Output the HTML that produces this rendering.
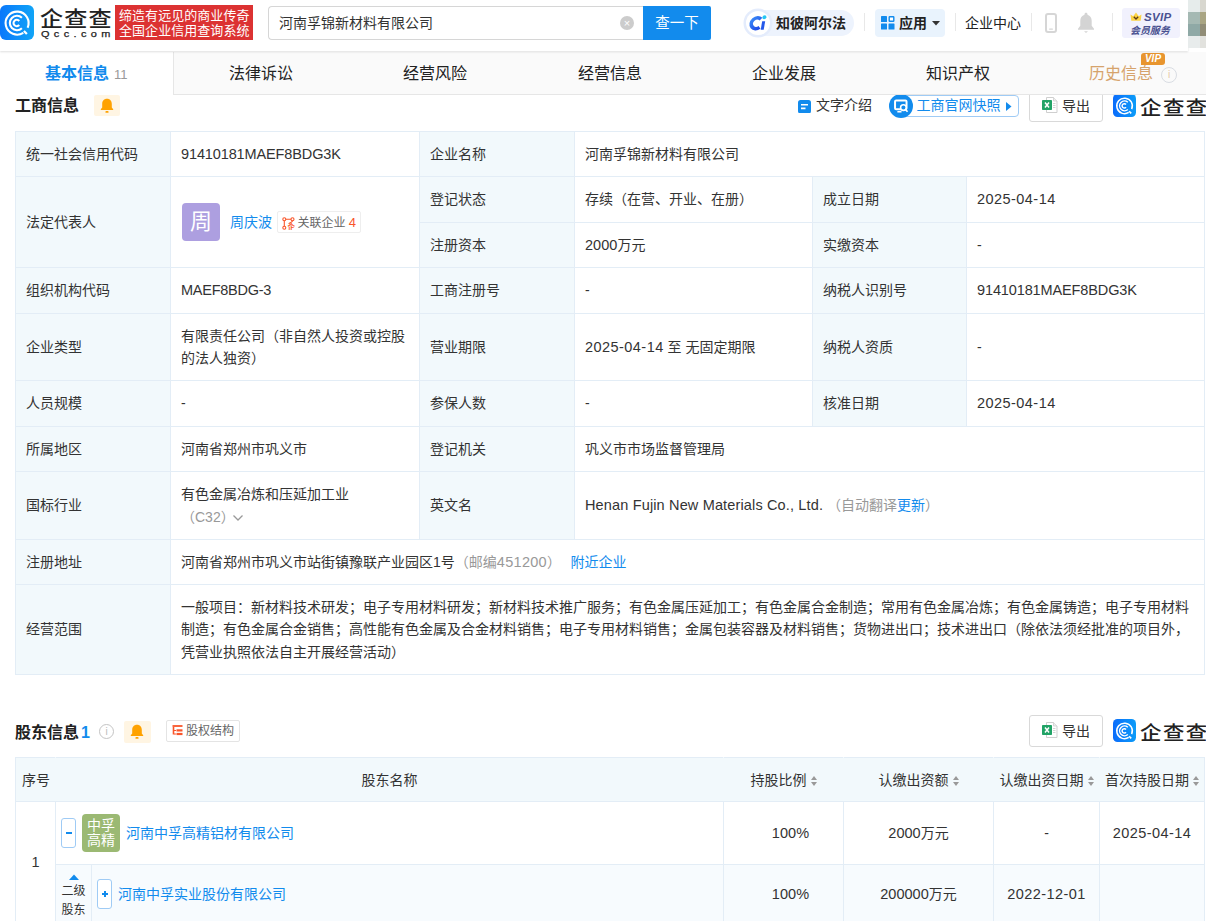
<!DOCTYPE html>
<html lang="zh-CN">
<head>
<meta charset="utf-8">
<title>河南孚锦新材料有限公司 - 企查查</title>
<style>
*{box-sizing:border-box;margin:0;padding:0}
html,body{width:1206px;height:921px;overflow:hidden;background:#fff}
body{font-family:"Liberation Sans","Noto Sans CJK SC",sans-serif;font-size:14px;color:#333;position:relative}
a{color:#128bed;text-decoration:none}
.abs{position:absolute}
/* header */
#hd{position:absolute;left:0;top:0;width:1188px;height:51px;background:#fff;box-shadow:0 1px 2px rgba(0,0,0,.13);z-index:5}
#logo{position:absolute;left:0;top:5px;width:34px;height:35px;border-radius:6px;background:linear-gradient(90deg,#0a78fb,#10a4f7)}
#brand{position:absolute;left:40px;top:5.500px;font-size:21px;line-height:26px;color:#222;letter-spacing:1px;white-space:nowrap;font-weight:500;transform:scaleX(1.1);transform-origin:0 0}
#brand2{position:absolute;left:41px;top:28px;font-size:9.500px;line-height:12px;color:#222;letter-spacing:3.800px;white-space:nowrap;font-weight:400;transform:scaleX(1.15);transform-origin:0 0;-webkit-text-stroke:.25px #222}
#slogan{position:absolute;left:115px;top:5px;width:138px;height:35px;background:#dc3232;color:#fff;font-size:13px;line-height:15px;padding:3px 0 0 4px;white-space:nowrap;letter-spacing:0.05px}
#search{position:absolute;left:268px;top:6px;width:375px;height:34px;border:1px solid #d6d6d6;border-right:0;border-radius:4px 0 0 4px;background:#fff;font-size:14px;line-height:32px;padding-left:10px;color:#333}
#clr{position:absolute;left:620px;top:16px;width:14px;height:14px;border-radius:7px;background:#ccc;color:#fff;font-size:11px;line-height:14px;text-align:center}
#sbtn{position:absolute;left:643px;top:6px;width:68px;height:34px;background:#128bed;color:#fff;font-size:14.500px;line-height:34px;text-align:center;border-radius:0 2px 2px 0}
#alpha{position:absolute;left:744px;top:10px;width:110px;height:26px;border-radius:13px;background:#edf3fd;font-size:14px;font-weight:700;color:#222;line-height:26px;padding-left:32px;white-space:nowrap}
#alpha i{position:absolute;left:2px;top:1px;width:24px;height:24px;border-radius:12px;background:#fff;box-shadow:0 0 0 2.500px #e4ecfc}
.vsep{position:absolute;top:13px;width:1px;height:18px;background:#e8e8e8}
#app{position:absolute;left:875px;top:9px;width:70px;height:28px;border-radius:4px;background:#e9f3fd;font-size:14px;font-weight:700;color:#222;line-height:28px;padding-left:24px;white-space:nowrap}
#qyzx{position:absolute;left:965px;top:13px;font-size:14px;line-height:20px;color:#222;white-space:nowrap}
#svip{position:absolute;left:1122px;top:8px;width:58px;height:30px;border-radius:3px;background:#f1f1fd;color:#44508d}
#svip .s1{position:absolute;left:22px;top:3px;font-size:11.500px;line-height:13px;font-weight:700;font-style:italic;letter-spacing:.3px;color:#4a5291}
#svip .s2{position:absolute;left:8px;top:16px;font-size:10px;line-height:13px;font-weight:700;font-style:italic;color:#4a5291;white-space:nowrap;letter-spacing:-.1px}
#pix{position:absolute;left:1188px;top:0;width:18px;height:48px;z-index:6}
#pix i{position:absolute;height:12px}
/* tabs */
#tabs{position:absolute;left:0;top:52px;width:1206px;height:43px;background:#fafafa;border-bottom:1px solid #e6e6e6}
#tabs .t{position:absolute;top:0;height:42px;line-height:44px;font-size:16px;color:#222;white-space:nowrap}
#tab0{position:absolute;left:0;top:52px;width:174px;height:43px;background:#fff;border-right:1px solid #e6e6e6}
#tab0 .tn{position:absolute;left:45px;top:0;line-height:44px;font-size:16px;font-weight:700;color:#128bed;white-space:nowrap}
#tab0 .tc{position:absolute;left:114px;top:2px;line-height:42px;font-size:13px;color:#999}
#vip{position:absolute;left:1141px;top:1px;width:24px;height:12px;background:#e8952f;color:#fff;font-size:10px;font-weight:700;font-style:italic;line-height:12px;text-align:center;border-radius:3px 3px 3px 0}
#info1{position:absolute;left:1161px;top:15px;width:16px;height:16px;border:1px solid #d9dde3;border-radius:8px;color:#e6c9a8;font-size:10px;line-height:13px;text-align:center}
.rep{position:relative;height:40px}
.rep .av{position:absolute;left:1px;top:1px;width:38px;height:38px;border-radius:4px;background:#ad9fe0;color:#fff;font-size:22px;line-height:38px;text-align:center}
.rep .nm{position:absolute;left:49px;top:9px;line-height:22px;white-space:nowrap}
.rep .rel{position:absolute;left:96px;top:9px;height:22px;border:1px solid #eee;border-radius:2px;line-height:21.500px;font-size:12px;color:#666;padding:0 4px 0 4px;white-space:nowrap}
.rep .rel svg{vertical-align:-2.500px;margin-right:2.500px}
.rep .rel b{color:#f9552a;font-weight:400;font-size:13px}
.exp{width:74px;height:32px;border:1px solid #d9d9d9;border-radius:3px;background:#fff;color:#333;font-size:14px;white-space:nowrap}
.slogo{width:23px;height:23px;border-radius:4.500px;background:linear-gradient(90deg,#0a6cfb,#0c9cf8);overflow:hidden}
.slogo svg{display:block}
.sbrand{font-size:19.500px;line-height:22px;color:#222;letter-spacing:1.300px;white-space:nowrap;font-weight:500;transform:scaleX(1.1);transform-origin:0 0}
.snap{height:22px;width:126px;border:1px solid #9fcbf5;border-radius:4px;background:#fff;color:#128bed;font-size:14px;line-height:19.500px;padding-left:22.500px;white-space:nowrap}
.infoc{width:15px;height:15px;border:1px solid #c4c4c4;border-radius:8px;color:#bbb;font-size:10px;line-height:13px;text-align:center}
.gq{height:22px;border:1px solid #e4e4e4;border-radius:2px;font-size:12px;line-height:21.500px;color:#666;padding:0 5px 0 5px;white-space:nowrap;background:#fff}
.gq svg{vertical-align:-1px;margin-right:3px}
#t2 th{background:#f2f9fc;color:#333;padding-top:2px;border-left-color:#f2f9fc;border-right-color:#f2f9fc}
#t2 th:first-child{border-left-color:#e3edf6}
#t2 th:last-child{border-right-color:#e3edf6}
#t2 .c{text-align:center;padding:0}
#t2 th.c{padding-top:2px}
#t2 tr.sub td{background:#f7fbfe}
.srt{display:inline-block;width:6px;height:10px;margin-left:4px;position:relative;vertical-align:-1px}
.srt:before{content:"";position:absolute;left:0;top:0;border:3px solid transparent;border-top:0;border-bottom:4px solid #999}
.srt:after{content:"";position:absolute;left:0;top:5.500px;border:3px solid transparent;border-bottom:0;border-top:4px solid #999}
.pm b{position:absolute;left:50%;top:50%;transform:translate(-50%,-50%);background:#128bed}
.pm{position:absolute;width:15px;height:30px;border:1px solid #9fcbf5;border-radius:3px;background:#fff;color:#128bed;font-size:12px;line-height:27px;text-align:center}
.clogo{position:absolute;left:26px;top:12px;width:38px;height:38px;border-radius:4px;background:#9bb973;color:#fff;font-size:14px;line-height:15px;text-align:center;padding-top:4px}
.n{font-size:14.500px;letter-spacing:.05px}
/* section */
.h2{position:absolute;font-size:16px;font-weight:700;color:#222;line-height:22px;white-space:nowrap}
.bell{position:absolute;width:26px;height:22px;background:#fff5e3;border-radius:2px}
table{border-collapse:collapse;table-layout:fixed;position:absolute}
td,th{border:1px solid #e3edf6;font-weight:400;font-size:14px;line-height:22.4px;color:#333;vertical-align:middle;text-align:left;padding:0 10px}
td.l{background:#f2f9fc}
.g{color:#999}
</style>
</head>
<body>
<svg class="abs" style="left:798px;top:99.500px" width="13" height="13.500" viewBox="0 0 13 13.500"><rect x="0" y="0" width="13" height="13.500" rx="2.500" fill="#128bed"/><path d="M3 4.800h7M3 8.400h4.500" stroke="#fff" stroke-width="1.600"/></svg><div class="abs" style="left:816px;top:94px;line-height:22px;color:#333;white-space:nowrap">文字介绍</div><div class="abs snap" style="left:893px;top:95px">工商官网快照<svg width="6" height="9" viewBox="0 0 6 9" style="margin-left:5.500px;vertical-align:-.5px"><path d="M0 0l5.500 4.500L0 9z" fill="#128bed"/></svg></div><div class="abs" style="left:889px;top:94px;width:24px;height:24px;border-radius:12px;background:#128bed"><svg width="24" height="24" viewBox="0 0 23 23"><rect x="5.800" y="6.300" width="11" height="8.400" rx="1" fill="none" stroke="#fff" stroke-width="1.900"/><circle cx="13.800" cy="13" r="2.700" fill="#128bed" stroke="#fff" stroke-width="1.500"/><path d="M15.800 15l2 2" stroke="#fff" stroke-width="1.600"/><path d="M8 17h4" stroke="#fff" stroke-width="1.500"/></svg></div><div class="abs exp" style="left:1029px;top:90px"><span style="position:absolute;left:12px;top:5.500px"><svg width="16" height="16" viewBox="0 0 16 16"><path d="M4.500 .5h7l3.500 3.500v11.500h-10.500z" fill="#fff" stroke="#cfcfcf" stroke-width="1"/><path d="M11.500 .5v3.500h3.500" fill="#eee" stroke="#cfcfcf" stroke-width=".8"/><path d="M11 6.500h2.500M11 8.500h2.500M11 10.500h2.500" stroke="#cfcfcf" stroke-width=".9"/><rect x="0" y="3" width="10" height="10" rx=".8" fill="#21a366"/><path d="M3 5.500l4 5M7 5.500l-4 5" stroke="#fff" stroke-width="1.500"/></svg></span><span style="position:absolute;left:32px;top:4px;line-height:22px">导出</span></div><div class="abs slogo" style="left:1113px;top:94px"><svg width="23" height="23" viewBox="0 0 34 34"><g fill="none" stroke="#fff" stroke-width="2.200"><path d="M27.600 22.300A11.500 11.500 0 1 0 23.300 27.300"/><path d="M21.900 12.200A7.200 7.200 0 1 0 21.900 22.800"/><path d="M19.200 15.500A3.200 3.200 0 1 0 19.200 19.500"/><path d="M23.900 25.400L26.900 28.600" stroke-width="2.400"/></g></svg></div><div class="abs sbrand" style="left:1140px;top:96.500px">企查查</div>
<div id="hd">
  <div id="logo"><svg width="34" height="35" viewBox="0 -0.5 34 35"><g fill="none" stroke="#fff" stroke-width="2.100" stroke-linecap="butt"><path d="M27.600 22.300A11.500 11.500 0 1 0 23.300 27.300"/><path d="M21.900 12.200A7.200 7.200 0 1 0 21.900 22.800"/><path d="M19.200 15.500A3.200 3.200 0 1 0 19.200 19.500"/><path d="M23.900 25.400L26.900 28.600" stroke-width="2.200"/></g></svg></div>
  <div id="brand">企查查</div>
  <div id="brand2">Qcc.com</div>
  <div id="slogan">缔造有远见的商业传奇<br>全国企业信用查询系统</div>
  <div id="search">河南孚锦新材料有限公司</div>
  <div id="clr">×</div>
  <div id="sbtn">查一下</div>
  <div id="alpha"><i><svg width="24" height="24" viewBox="0 0 24 24" style="position:absolute;left:0;top:0"><defs><linearGradient id="ag" x1="0" y1="0" x2="1" y2="1"><stop offset="0" stop-color="#3b8af7"/><stop offset="1" stop-color="#1c47e6"/></linearGradient></defs><g transform="skewX(-10) translate(2.200 0)"><path d="M14.200 8.100A5.400 5.400 0 1 0 14.200 16.300" fill="none" stroke="url(#ag)" stroke-width="3.600"/><path d="M17.300 10.300v8.400" stroke="#2458ea" stroke-width="3"/><circle cx="17.300" cy="6.200" r="2" fill="#25c6f4"/></g></svg></i>知彼阿尔法</div>
  <div class="vsep" style="left:864px"></div>
  <div id="app"><svg width="14" height="14" viewBox="0 0 14 14" style="position:absolute;left:6px;top:7px"><rect x="0" y="0" width="6" height="6" rx=".6" fill="#128bed"/><rect x="0" y="7.500" width="6" height="6" rx=".6" fill="#128bed"/><rect x="7.500" y="7.500" width="6" height="6" rx=".6" fill="#128bed"/><rect x="8.200" y=".7" width="4.600" height="4.600" rx=".5" fill="#fff" stroke="#128bed" stroke-width="1.400"/></svg><svg width="8" height="5" viewBox="0 0 8 5" style="position:absolute;left:57px;top:12px"><path d="M0 0h8L4 4.500z" fill="#333"/></svg>应用</div>
  <div class="vsep" style="left:955px"></div>
  <div id="qyzx">企业中心</div>
  <div class="vsep" style="left:1031px"></div>
  <div class="vsep" style="left:1112px"></div>
  <svg class="abs" style="left:1044px;top:12px" width="14" height="22" viewBox="0 0 14 22"><rect x="2" y="2" width="10" height="18" rx="2" fill="none" stroke="#d6d6d6" stroke-width="2"/><rect x="5" y="16.400" width="4" height="1.300" rx=".6" fill="#d6d6d6"/></svg>
  <svg class="abs" style="left:1076px;top:12px" width="20" height="22" viewBox="0 0 20 22"><path d="M10 .8c-.9 0-1.500.6-1.500 1.500v.4C5.700 3.500 4.300 6 4.300 8.800v5L2 16.800v1h16v-1l-2.300-3v-5c0-2.800-1.400-5.300-4.200-6.100v-.4c0-.9-.6-1.500-1.500-1.500z" fill="#d4d4d4"/><path d="M8 19.300h4l-2 1.700z" fill="#d4d4d4"/></svg>
  <div id="svip"><svg class="abs" style="left:8px;top:4px" width="12" height="10" viewBox="0 0 12 10"><path d="M.5 2.500L3.200 4.300 6 .6l2.800 3.700 2.700-1.800-.8 6.300H1.300z" fill="#fcd345"/><path d="M3.800 4.800L6 7l2.200-2.200" fill="none" stroke="#5a3a17" stroke-width="1.300"/></svg><span class="s1">SVIP</span><span class="s2">会员服务</span></div>
</div>
<div id="pix"><i style="left:0;top:0;width:12px;background:#e6eceb"></i><i style="left:12px;top:0;width:6px;background:#d8d7cf"></i><i style="left:0;top:12px;width:12px;background:#a5b9b3"></i><i style="left:12px;top:12px;width:6px;background:#a9a583"></i><i style="left:0;top:24px;width:12px;background:#8fa9a6"></i><i style="left:12px;top:24px;width:6px;background:#918d77"></i><i style="left:0;top:36px;width:12px;background:#e8ecec"></i><i style="left:12px;top:36px;width:6px;background:#e2e2de"></i></div>
<div id="tabs">
  <div class="t" style="left:229px">法律诉讼</div>
  <div class="t" style="left:403px">经营风险</div>
  <div class="t" style="left:578px">经营信息</div>
  <div class="t" style="left:752px">企业发展</div>
  <div class="t" style="left:926px">知识产权</div>
  <div class="t" style="left:1089px;color:#d6a36c">历史信息</div>
  <div id="vip">VIP</div>
  <div id="info1">i</div>
</div>
<div id="tab0"><span class="tn">基本信息</span><span class="tc">11</span></div>
<div class="h2" style="left:15px;top:94.500px">工商信息</div>
<div class="bell" style="left:94px;top:95px;height:21px"><svg width="26" height="22" viewBox="0 0 26 22"><path d="M13 3.800c-3 0-4.800 2.200-4.800 5v3.700l-1.400 1.800v.8h12.400v-.8l-1.400-1.800V8.800c0-2.800-1.800-5-4.800-5z" fill="#ffa200"/><rect x="11.400" y="16" width="3.200" height="1.800" rx=".9" fill="#ffa200"/></svg></div>
<table id="t1" style="left:15px;top:131px;width:1189px">
<colgroup><col style="width:155px"><col style="width:249px"><col style="width:155px"><col style="width:238px"><col style="width:154px"><col style="width:238px"></colgroup>
<tr style="height:45px"><td class="l">统一社会信用代码</td><td><span class="n" style="letter-spacing:-.12px">91410181MAEF8BDG3K</span></td><td class="l">企业名称</td><td colspan="3">河南孚锦新材料有限公司</td></tr>
<tr style="height:46px"><td class="l" rowspan="2">法定代表人</td><td rowspan="2"><div class="rep"><span class="av">周</span><a class="nm">周庆波</a><span class="rel"><svg width="13" height="13" viewBox="0 0 13 13"><g fill="none" stroke="#f9552a" stroke-width="1.100"><circle cx="2.300" cy="2.300" r="1.500"/><circle cx="10.500" cy="2.300" r="1.500"/><circle cx="2.300" cy="10.700" r="1.500"/><path d="M2.300 3.800v5.400M3.800 2.300h5.200M10.500 3.800c0 2-3.200 1.200-3.700 3.200"/></g><text x="5.600" y="12.600" font-size="7.500" fill="#f9552a" font-family="Noto Sans CJK SC,sans-serif" font-weight="700">企</text></svg>关联企业 <b>4</b></span></div></td><td class="l">登记状态</td><td>存续（在营、开业、在册）</td><td class="l">成立日期</td><td><span class="n" style="letter-spacing:.45px">2025-04-14</span></td></tr>
<tr style="height:45px"><td class="l">注册资本</td><td><span class="n">2000</span>万元</td><td class="l">实缴资本</td><td>-</td></tr>
<tr style="height:46px"><td class="l">组织机构代码</td><td><span class="n" style="letter-spacing:-.26px">MAEF8BDG-3</span></td><td class="l">工商注册号</td><td>-</td><td class="l">纳税人识别号</td><td><span class="n" style="letter-spacing:-.12px">91410181MAEF8BDG3K</span></td></tr>
<tr style="height:67px"><td class="l">企业类型</td><td>有限责任公司（非自然人投资或控股的法人独资）</td><td class="l">营业期限</td><td><span class="n" style="letter-spacing:.45px">2025-04-14</span> 至 无固定期限</td><td class="l">纳税人资质</td><td>-</td></tr>
<tr style="height:46px"><td class="l">人员规模</td><td>-</td><td class="l">参保人数</td><td>-</td><td class="l">核准日期</td><td><span class="n" style="letter-spacing:.45px">2025-04-14</span></td></tr>
<tr style="height:45px"><td class="l">所属地区</td><td>河南省郑州市巩义市</td><td class="l">登记机关</td><td colspan="3">巩义市市场监督管理局</td></tr>
<tr style="height:68px"><td class="l">国标行业</td><td>有色金属冶炼和压延加工业<br><span class="g">（C32）<svg width="12" height="8" viewBox="0 0 12 8" style="margin-left:-2.500px"><path d="M1.500 1.500L6 6l4.500-4.500" fill="none" stroke="#999" stroke-width="1.300"/></svg></span></td><td class="l">英文名</td><td colspan="3"><span class="n" style="letter-spacing:.15px">Henan Fujin New Materials Co., Ltd.</span> <span class="g">（自动翻译<a>更新</a>）</span></td></tr>
<tr style="height:45px"><td class="l">注册地址</td><td colspan="5">河南省郑州市巩义市站街镇豫联产业园区1号<span class="g">（邮编<span class="n" style="letter-spacing:.3px">451200</span>）</span><a style="margin-left:9.500px">附近企业</a></td></tr>
<tr style="height:90px"><td class="l">经营范围</td><td colspan="5">一般项目：新材料技术研发；电子专用材料研发；新材料技术推广服务；有色金属压延加工；有色金属合金制造；常用有色金属冶炼；有色金属铸造；电子专用材料制造；有色金属合金销售；高性能有色金属及合金材料销售；电子专用材料销售；金属包装容器及材料销售；货物进出口；技术进出口（除依法须经批准的项目外，凭营业执照依法自主开展经营活动）</td></tr>
</table>
<div class="h2" style="left:15px;top:721.700px">股东信息<span style="color:#128bed;margin-left:2px;font-family:'Liberation Sans',sans-serif">1</span></div>
<div class="abs infoc" style="left:99px;top:724px">i</div>
<div class="bell" style="left:124px;top:721px;width:27px"><svg width="26" height="22" viewBox="0 0 26 22"><path d="M13 3.800c-3 0-4.800 2.200-4.800 5v3.700l-1.400 1.800v.8h12.400v-.8l-1.400-1.800V8.800c0-2.800-1.800-5-4.800-5z" fill="#ffa200"/><rect x="11.400" y="16" width="3.200" height="1.800" rx=".9" fill="#ffa200"/></svg></div>
<div class="abs gq" style="left:166px;top:720px"><svg width="11" height="11" viewBox="0 0 11 11"><path d="M.5 1h10" stroke="#f9552a" stroke-width="1.800"/><path d="M1.500 2v7.500" stroke="#f9552a" stroke-width="1.600"/><path d="M2 5.500h2M2 9h2" stroke="#f9552a" stroke-width="1.200"/><rect x="4.500" y="4.300" width="6" height="2.200" fill="#f9552a"/><rect x="4.500" y="7.900" width="6" height="2.200" fill="#f9552a"/></svg>股权结构</div>
<div class="abs exp" style="left:1029px;top:715px"><span style="position:absolute;left:12px;top:5.500px"><svg width="16" height="16" viewBox="0 0 16 16"><path d="M4.500 .5h7l3.500 3.500v11.500h-10.500z" fill="#fff" stroke="#cfcfcf" stroke-width="1"/><path d="M11.500 .5v3.500h3.500" fill="#eee" stroke="#cfcfcf" stroke-width=".8"/><path d="M11 6.500h2.500M11 8.500h2.500M11 10.500h2.500" stroke="#cfcfcf" stroke-width=".9"/><rect x="0" y="3" width="10" height="10" rx=".8" fill="#21a366"/><path d="M3 5.500l4 5M7 5.500l-4 5" stroke="#fff" stroke-width="1.500"/></svg></span><span style="position:absolute;left:32px;top:4px;line-height:22px">导出</span></div><div class="abs slogo" style="left:1113px;top:719px"><svg width="23" height="23" viewBox="0 0 34 34"><g fill="none" stroke="#fff" stroke-width="2.200"><path d="M27.600 22.300A11.500 11.500 0 1 0 23.300 27.300"/><path d="M21.900 12.200A7.200 7.200 0 1 0 21.900 22.800"/><path d="M19.200 15.500A3.200 3.200 0 1 0 19.200 19.500"/><path d="M23.900 25.400L26.900 28.600" stroke-width="2.400"/></g></svg></div><div class="abs sbrand" style="left:1140px;top:721.500px">企查查</div>
<table id="t2" style="left:15px;top:757px;width:1189px">
<colgroup><col style="width:40px"><col style="width:36px"><col style="width:632px"><col style="width:120px"><col style="width:150px"><col style="width:106px"><col style="width:105px"></colgroup>
<tr style="height:44px" class="hd"><th style="padding:2px 0 0 6px">序号</th><th colspan="2" style="text-align:center">股东名称</th><th class="c">持股比例<span class="srt"></span></th><th class="c">认缴出资额<span class="srt"></span></th><th class="c">认缴出资日期<span class="srt"></span></th><th class="c">首次持股日期<span class="srt"></span></th></tr>
<tr style="height:63px"><td rowspan="2" style="text-align:center;padding:0"><span class="n">1</span></td><td colspan="2" style="padding:0"><div style="position:relative;height:62px"><span class="pm" style="left:5px;top:16px"><b style="width:6px;height:2px"></b></span><span class="clogo">中孚<br>高精</span><a class="abs" style="left:70px;top:20px;line-height:22px;white-space:nowrap">河南中孚高精铝材有限公司</a></div></td><td class="c" style="padding-left:14px"><span class="n">100%</span></td><td class="c"><span class="n">2000</span>万元</td><td class="c">-</td><td class="c"><span class="n" style="letter-spacing:.45px">2025-04-14</span></td></tr>
<tr style="height:59px" class="sub"><td style="padding:0;text-align:center;font-size:12px;line-height:19px;vertical-align:top"><div style="position:relative;height:56px;padding-top:17px"><svg class="abs" style="left:13px;top:9px" width="10" height="6" viewBox="0 0 10 6"><path d="M0 6L5 .5 10 6z" fill="#128bed"/></svg>二级<br>股东</div></td><td style="padding:0"><div style="position:relative;height:58px"><span class="pm" style="left:5px;top:14px"><b style="width:6px;height:2px"></b><b style="width:2px;height:6px"></b></span><a class="abs" style="left:26px;top:18px;line-height:22px;white-space:nowrap">河南中孚实业股份有限公司</a></div></td><td class="c" style="padding-left:14px"><span class="n">100%</span></td><td class="c"><span class="n">200000</span>万元</td><td class="c"><span class="n" style="letter-spacing:.45px">2022-12-01</span></td><td class="c"></td></tr>
</table>
</body>
</html>
